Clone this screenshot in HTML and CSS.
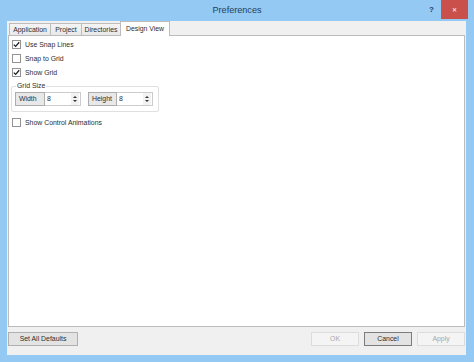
FILE: index.html
```html
<!DOCTYPE html>
<html>
<head>
<meta charset="utf-8">
<link rel="stylesheet" href="styles.css">
</head>
<body>
<div class="window">
  <div class="titlebar">
    <span class="title">Preferences</span>
    <div class="controls">
      <span class="help">?</span>
      <span class="close">&#x2715;</span>
    </div>
  </div>
  <div class="client">
    <div class="tabs">
      <span class="tab t-app">Application</span>
      <span class="tab t-proj">Project</span>
      <span class="tab t-dir">Directories</span>
      <span class="tab t-design active">Design View</span>
    </div>
    <div class="panel">
      <label class="check">
        <span class="box"><svg viewBox="0 0 9 9" width="7" height="7"><path d="M1 4.6 L3.4 7 L8 1.6" fill="none" stroke="#1e1e1e" stroke-width="1.6"/></svg></span>
        <span>Use Snap Lines</span>
      </label>
      <label class="check">
        <span class="box"></span>
        <span>Snap to Grid</span>
      </label>
      <label class="check">
        <span class="box"><svg viewBox="0 0 9 9" width="7" height="7"><path d="M1 4.6 L3.4 7 L8 1.6" fill="none" stroke="#1e1e1e" stroke-width="1.6"/></svg></span>
        <span>Show Grid</span>
      </label>
      <div class="group">
        <span class="group-label">Grid Size</span>
        <div class="fields">
          <span class="field-label w-label">Width</span>
          <span class="num">8<span class="spin"><i class="up"></i><i class="down"></i></span></span>
          <span class="field-label h-label">Height</span>
          <span class="num">8<span class="spin"><i class="up"></i><i class="down"></i></span></span>
        </div>
      </div>
      <label class="check check-last">
        <span class="box"></span>
        <span>Show Control Animations</span>
      </label>
    </div>
    <div class="footer">
      <span class="btn wide">Set All Defaults</span>
      <span class="btn disabled">OK</span>
      <span class="btn default">Cancel</span>
      <span class="btn disabled">Apply</span>
    </div>
  </div>
</div>
</body>
</html>
```
FILE: styles.css
```css
* { box-sizing: border-box; }
body {
  margin: 0;
  width: 474px;
  height: 362px;
  overflow: hidden;
  background: #93c9f2;
  font-family: "Liberation Sans", Arial, sans-serif;
  font-size: 6.9px;
  color: #2e2e2e;
}
.window {
  display: flex;
  flex-direction: column;
  height: 362px;
}
.titlebar {
  height: 21px;
  flex: none;
  display: grid;
  grid-template-columns: 1fr auto 1fr;
  align-items: start;
}
.title {
  grid-column: 2;
  font-size: 9.1px;
  line-height: 21px;
  color: #24405f;
}
.controls {
  grid-column: 3;
  justify-self: end;
  display: flex;
  align-items: flex-start;
  margin-right: 6px;
}
.help {
  font-size: 8px;
  font-weight: bold;
  color: #1d3d6c;
  margin-top: 5px;
  margin-right: 7px;
}
.close {
  width: 27px;
  height: 19px;
  background: #c9504b;
  color: #f4dcdb;
  display: flex;
  align-items: center;
  justify-content: center;
  font-size: 6px;
  font-weight: bold;
}
.client {
  flex: 1;
  margin: 0 8px 7px 7px;
  background: #f0f0f0;
  display: flex;
  flex-direction: column;
  padding: 0 1px;
}
.tabs {
  height: 14px;
  flex: none;
  display: flex;
  align-items: flex-end;
  padding-left: 1px;
  position: relative;
  z-index: 1;
}
.tab {
  height: 12px;
  border: 1px solid #bcbcbc;
  border-bottom: none;
  background: linear-gradient(#f4f4f4, #e9e9e9);
  line-height: 11px;
  text-align: center;
  margin-right: -1px;
  white-space: nowrap;
}
.t-app { width: 42px; }
.t-proj { width: 32px; }
.t-dir { width: 40px; }
.t-design { width: 50px; }
.tab.active {
  height: 15px;
  margin-bottom: -1px;
  background: #fff;
  line-height: 13px;
}
.panel {
  flex: 1;
  background: #fff;
  border: 1px solid #bcbcbc;
  padding: 1px 0 0 3px;
  display: flex;
  flex-direction: column;
  align-items: flex-start;
}
.check {
  display: flex;
  align-items: center;
  gap: 4px;
  height: 14px;
}
.box {
  width: 9px;
  height: 9px;
  border: 1px solid #939393;
  background: #fff;
  display: flex;
  align-items: center;
  justify-content: center;
}
.group {
  margin: 7px 0 0 -1px;
  width: 148px;
  height: 26px;
  border: 1px solid #e0e0e0;
  border-radius: 2px;
  padding: 0 0 0 3px;
}
.group-label {
  display: block;
  width: max-content;
  height: 8px;
  line-height: 8px;
  margin: -5px 0 0 1px;
  padding: 0 1px;
  background: #fff;
}
.fields {
  display: flex;
  margin-top: 2px;
  height: 14px;
}
.field-label {
  height: 14px;
  border: 1px solid #adadad;
  background: #e8e8e8;
  line-height: 12px;
  padding-left: 3px;
}
.w-label { width: 30px; }
.h-label { width: 29px; margin-left: 7px; }
.num {
  width: 36px;
  height: 14px;
  border: 1px solid #cacccf;
  border-left: none;
  background: #fff;
  line-height: 12px;
  padding-left: 2px;
  display: flex;
  justify-content: space-between;
}
.spin {
  width: 8px;
  height: 12px;
  display: flex;
  flex-direction: column;
  align-items: center;
  justify-content: center;
  gap: 2px;
  margin-right: 1px;
  background: #f2f2f2;
}
.spin i {
  width: 0;
  height: 0;
  border-left: 2px solid transparent;
  border-right: 2px solid transparent;
}
.spin .up { border-bottom: 2px solid #333; }
.spin .down { border-top: 2px solid #333; }
.check-last { margin-top: 3px; }
.footer {
  height: 28px;
  flex: none;
  display: flex;
  align-items: flex-start;
  padding-top: 5px;
  gap: 5px;
}
.btn {
  width: 48px;
  height: 14px;
  border: 1px solid #b0b0b0;
  background: #e3e3e3;
  line-height: 12px;
  text-align: center;
}
.btn.wide {
  width: 70px;
  margin-right: auto;
}
.btn.default {
  border-color: #7c7c7c;
}
.btn.disabled {
  background: #f4f4f4;
  border-color: #dcdcdc;
  color: #a8a8a8;
}
```
